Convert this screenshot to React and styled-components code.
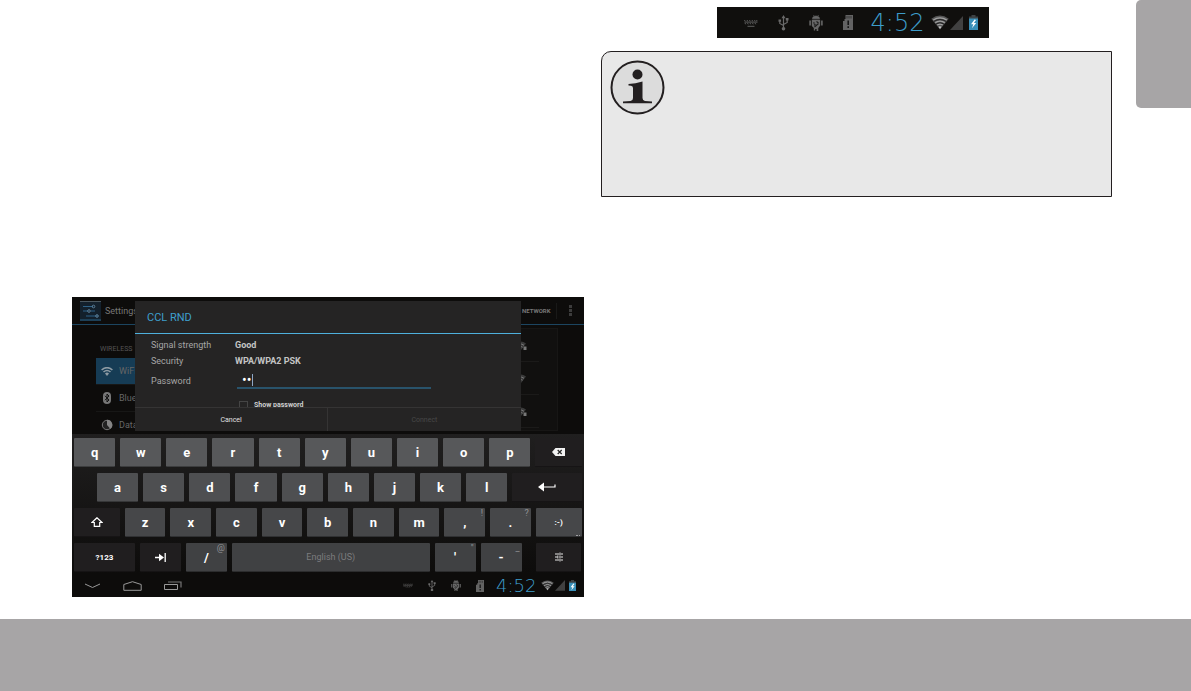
import { useState } from "react";
import styled, { createGlobalStyle } from "styled-components";

const GlobalStyle = createGlobalStyle`
    * {
        box-sizing: border-box;
    }

    body {
        margin: 0;
        background: #fff;
        font-family: Roboto, "Liberation Sans", sans-serif;
    }

    button {
        border: none;
        padding: 0;
        background: none;
        color: inherit;
        font-family: inherit;
    }
`;

const KeyboardIcon = ({ width }) => (
    <Icon viewBox="0 0 14 8" $width={width}>
        <path d="M.5 1l.7 1.3M3 1l.7 1.3M5.5 1l.7 1.3M8 1l.7 1.3M10.5 1l.7 1.3M12.8 1v1.3M1 4l.7 1.3M3.5 4l.7 1.3M6 4l.7 1.3M8.5 4l.7 1.3M11 4l.7 1.3M.5 3.1h13M3.5 7.3h7" stroke="#5f5f5f" strokeWidth="1" fill="none" />
    </Icon>
);

const UsbIcon = ({ width }) => (
    <Icon viewBox="0 0 11 16" $width={width}>
        <path d="M5.5 3v10M5.5 10.5L1.8 8.5V6M5.5 9.5L9.2 7.5V4.5" stroke="#6a6a6a" strokeWidth="1.2" fill="none" />
        <path d="M5.5 0l2 3.2h-4zM.5 4.6h2.6v2.2H.5zM7.8 3h2.7v2.6H7.8z" fill="#6a6a6a" />
        <circle cx="5.5" cy="13.7" r="1.8" fill="#6a6a6a" />
    </Icon>
);

const AndroidIcon = ({ width }) => (
    <Icon viewBox="0 0 14 16" $width={width}>
        <path d="M3.5 3.8C3.5 2 4.8 1 7 1s3.500 1 3.500 2.800zM4.300 0l1 1.400M9.700 0l-1 1.400" fill="#666" stroke="#666" strokeWidth=".6" />
        <path d="M2.800 4.800h8.400v5.700L9.300 13v3H7.600v-2H6.200v1.500H4.800V13l-2-2zM.3 5.500h1.600v5H.3zM12.100 5.500h1.600v5h-1.600z" fill="#666" />
        <path d="M5.500 12l4-3.500M7.500 6.500l2 1.500M4.500 7.500l1 1M5 10.300l1.500-1" stroke="#1b1b1a" strokeWidth="1.100" />
    </Icon>
);

const CardIcon = ({ width }) => (
    <Icon viewBox="0 0 10 15" $width={width}>
        <path d="M2.500 0H10v15H0V6h1.500V4h1z" fill="#636363" />
        <path d="M4 1v2.500M6 1v2.500M8 1v2.500" stroke="#2c2c2c" strokeWidth=".8" />
        <path d="M5.200 5.500v4.500M5.200 11.300v1.700" stroke="#111" strokeWidth="1.500" />
    </Icon>
);

const WifiStatusIcon = ({ width }) => (
    <Icon viewBox="0 0 18 15" $width={width}>
        <path d="M9 14.500L.3 3.700Q9-2.600 17.700 3.700z" fill="#555" />
        <path d="M2.300 5q6.700-4.400 13.400 0M4.300 7.600q4.700-3 9.400 0M6.300 10q2.700-1.700 5.400 0" stroke="#a2a2a2" strokeWidth="1.300" fill="none" />
        <path d="M3 6.400q6-3.800 12 0M5 9q4-2.600 8 0" stroke="#222" strokeWidth="1" fill="none" />
        <path d="M7.400 11.800L9 14l1.600-2.200Q9 10.800 7.400 11.800z" fill="#c4c4c4" />
    </Icon>
);

const SignalIcon = ({ width }) => (
    <Icon viewBox="0 0 13 14" $width={width}>
        <path d="M13 0v14H0z" fill="#414141" />
    </Icon>
);

const BatteryIcon = ({ width }) => (
    <Icon viewBox="0 0 9 15" $width={width}>
        <path d="M2.500 0h4v1.500H9V4H0V1.500h2.500z" fill="#3d4244" />
        <path d="M0 3.500h9V15H0z" fill="#398fb8" />
        <path d="M5.600 4.500L2 9.300h2.300L3 13.300l4.200-5.200H4.900L7 5z" fill="#fff" />
    </Icon>
);

const StatusIcons = ({ compact }) => (
    <StatusGroup $compact={compact}>
        <Notifications $compact={compact}>
            <KeyboardIcon width={compact ? 10 : 14} />
            <UsbIcon width={compact ? 8 : 11} />
            <AndroidIcon width={compact ? 10 : 14} />
            <CardIcon width={compact ? 8 : 10} />
        </Notifications>
        <Clock $compact={compact}>4:52</Clock>
        <Signals>
            <WifiStatusIcon width={compact ? 13 : 18} />
            <SignalIcon width={compact ? 10 : 13} />
        </Signals>
        <BatteryIcon width={compact ? 7 : 9} />
    </StatusGroup>
);

const InfoIcon = () => (
    <Icon viewBox="0 0 55 55" $width={55}>
        <circle cx="27.500" cy="27.500" r="26" fill="#dcdcdc" stroke="#231f20" strokeWidth="2" />
        <circle cx="27.500" cy="14.500" r="5" fill="#231f20" />
        <path d="M18.500 24q7-.2 14-2.500V38q0 2.700 2.500 3l7 .6v1.600H13v-1.600l7.500-.6q2.500-.3 2.500-3V28q0-2-2-2.200l-2.500-.3z" fill="#231f20" />
    </Icon>
);

const SettingsIcon = () => (
    <Icon viewBox="0 0 21 20" $width={21}>
        <path d="M0 0h21v20H0z" fill="#13202c" />
        <path d="M0 .5h21" stroke="#4a565e" />
        <path d="M0 19h21" stroke="#1d4058" strokeWidth="2" />
        <path d="M3 5.500h10M3 10h5M11 10h4M6 15h12" stroke="#2d6187" strokeWidth="1.200" />
        <circle cx="13.500" cy="5.500" r="1.300" stroke="#5c7f98" fill="none" />
        <circle cx="9" cy="10" r="1.300" stroke="#5c7f98" fill="none" />
        <circle cx="17" cy="15" r="1.300" stroke="#5c7f98" fill="none" />
    </Icon>
);

const WifiIcon = () => (
    <Icon viewBox="0 0 12 9" $width={12}>
        <path d="M.6 3Q6-1.600 11.400 3M2.500 5Q6 2 9.500 5" stroke="#8d9aa3" strokeWidth="1.600" fill="none" />
        <path d="M4 6.500Q6 4.700 8 6.500L6 9z" fill="#8d9aa3" />
    </Icon>
);

const BluetoothIcon = () => (
    <Icon viewBox="0 0 12 12" $width={12}>
        <rect x="2" y="0" width="8" height="12" rx="4" fill="#777" />
        <path d="M4 3.800l4 4.200-2 2V2l2 2-4 4.200" stroke="#111" fill="none" />
    </Icon>
);

const DataIcon = () => (
    <Icon viewBox="0 0 12 12" $width={12}>
        <circle cx="6" cy="6" r="4.700" stroke="#777" strokeWidth="1" fill="#222" />
        <path d="M6 6V.8A5.200 5.200 0 0 1 9.500 10z" fill="#858585" />
    </Icon>
);

const NetworkWifiIcon = ({ locked }) => (
    <Icon viewBox="0 0 12 9" $width={12}>
        <path d="M0 2.500Q6-1.500 11 2.500L6 9z" fill="#3a3a3a" />
        <path d="M4 3.300q3-.8 5 1M4.500 5.800q2-.6 3 .4" stroke="#777" fill="none" />
        {locked && <path d="M8.500 5.500h3V9h-3z" fill="#777" />}
    </Icon>
);

const BackspaceIcon = () => (
    <Icon viewBox="0 0 13 8" $width={13}>
        <path d="M0 4l3.500-4H13v8H3.500z" fill="#f2f2f2" />
        <path d="M5.700 2l4 4M9.700 2l-4 4" stroke="#222" strokeWidth="1.200" />
    </Icon>
);

const EnterIcon = () => (
    <Icon viewBox="0 0 18 10" $width={18}>
        <path d="M0 5l6-4.500v9z" fill="#fff" />
        <path d="M5 5h12V2.500" stroke="#fff" strokeWidth="1.200" fill="none" />
    </Icon>
);

const ShiftIcon = () => (
    <Icon viewBox="0 0 12 10" $width={12}>
        <path d="M6 .8L1 5.500h2.300v3.800h5.400V5.500H11z" stroke="#fff" strokeWidth="1.200" fill="none" />
    </Icon>
);

const TabIcon = () => (
    <Icon viewBox="0 0 11 9" $width={11}>
        <path d="M0 4.500h5M10.200 0v9" stroke="#fff" strokeWidth="1.300" />
        <path d="M4 .8L9 4.500 4 8.200z" fill="#fff" />
    </Icon>
);

const TuneIcon = () => (
    <Icon viewBox="0 0 10 10" $width={10}>
        <path d="M1 2h4M7 2h2M1 5h2M5 5h4M1 8h4M7 8h2M6 .5v3M3.800 3.500v3M6 6.500v3" stroke="#e6e6e6" strokeWidth="1" />
    </Icon>
);

const BackIcon = () => (
    <Icon viewBox="0 0 17 6" $width={17}>
        <path d="M1 1l7.500 3.500L16 1" stroke="#999" fill="none" />
    </Icon>
);

const HomeIcon = () => (
    <Icon viewBox="0 0 19 10" $width={19}>
        <path d="M.8 9.300V3.500L9.500.7l8.700 2.800v5.800z" stroke="#999" fill="none" />
    </Icon>
);

const RecentIcon = () => (
    <Icon viewBox="0 0 18 9" $width={18}>
        <path d="M.5 3.500h13v5H.5z" stroke="#999" fill="none" />
        <path d="M4 1h13v5.500" stroke="#777" strokeWidth="1.200" fill="none" />
    </Icon>
);

const keyRows = [
    {
        tone: "#57585a",
        keys: [
            ..."qwertyuiop".split("").map((label) => ({ label })),
            { name: "Backspace", icon: <BackspaceIcon />, dark: true, grow: 46 }
        ]
    },
    {
        tone: "#4e4f51",
        indent: true,
        keys: [
            ..."asdfghjkl".split("").map((label) => ({ label })),
            { name: "Enter", icon: <EnterIcon />, dark: true, grow: 69 }
        ]
    },
    {
        tone: "#464749",
        keys: [
            { name: "Shift", icon: <ShiftIcon />, dark: true, grow: 46 },
            ..."zxcvbnm".split("").map((label) => ({ label })),
            { label: ",", hint: "!" },
            { label: ".", hint: "?" },
            { label: ":-)", more: true, small: true, grow: 46 }
        ]
    },
    {
        tone: "#404143",
        keys: [
            { label: "?123", small: true, dark: true, grow: 61 },
            { name: "Tab", icon: <TabIcon />, dark: true },
            { label: "/", hint: "@" },
            { label: "English (US)", space: true, grow: 198 },
            { label: "'", hint: "\"" },
            { label: "-", hint: "_" },
            { name: "Input options", icon: <TuneIcon />, dark: true, grow: 46, apart: true }
        ]
    }
];

const networks = [
    { id: 1, locked: true },
    { id: 2, locked: false },
    { id: 3, locked: true }
];

const App = () => {
    const [password, setPassword] = useState("••");
    const [isShown, setIsShown] = useState(false);

    return (
        <Page>
            <GlobalStyle />
            <Main>
                <Tablet>
                    <Backdrop>
                        <AppBar>
                            <SettingsIcon />
                            <AppTitle>Settings</AppTitle>
                            <AddNetwork>ADD NETWORK</AddNetwork>
                            <MenuButton aria-label="More">
                                <Dot />
                                <Dot />
                                <Dot />
                            </MenuButton>
                        </AppBar>
                        <SettingsBody>
                            <Menu>
                                <MenuHeading>WIRELESS</MenuHeading>
                                <MenuItem $active><WifiIcon />WiFi</MenuItem>
                                <MenuItem><BluetoothIcon />Bluetooth</MenuItem>
                                <MenuItem><DataIcon />Data usage</MenuItem>
                            </Menu>
                            <NetworkList>
                                {networks.map((network) => (
                                    <Network key={network.id}>
                                        <NetworkWifiIcon locked={network.locked} />
                                    </Network>
                                ))}
                            </NetworkList>
                        </SettingsBody>
                        <Dialog role="dialog" aria-labelledby="network">
                            <DialogTitle id="network">CCL RND</DialogTitle>
                            <DialogBody>
                                <Row>
                                    <Term>Signal strength</Term>
                                    <Value>Good</Value>
                                </Row>
                                <Row>
                                    <Term>Security</Term>
                                    <Value>WPA/WPA2 PSK</Value>
                                </Row>
                                <Row $tall>
                                    <Term as="label" htmlFor="password">Password</Term>
                                    <Field>
                                        <PasswordInput
                                            id="password"
                                            value={password}
                                            onChange={(e) => setPassword(e.target.value)}
                                        />
                                        <Caret />
                                    </Field>
                                </Row>
                                <ShowPassword>
                                    <Checkbox
                                        type="checkbox"
                                        checked={isShown}
                                        onChange={() => setIsShown(!isShown)}
                                    />
                                    Show password
                                </ShowPassword>
                            </DialogBody>
                            <Actions>
                                <Action>Cancel</Action>
                                <Action disabled>Connect</Action>
                            </Actions>
                        </Dialog>
                    </Backdrop>
                    <Keyboard>
                        {keyRows.map((row) => (
                            <KeyRow key={row.tone} $indent={row.indent}>
                                {row.keys.map((item) => (
                                    <Key
                                        key={item.label || item.name}
                                        aria-label={item.name}
                                        $tone={item.dark ? "#201e1f" : row.tone}
                                        $grow={item.grow}
                                        $small={item.small}
                                        $space={item.space}
                                        $apart={item.apart}
                                    >
                                        {item.icon || item.label}
                                        {item.hint && <Hint>{item.hint}</Hint>}
                                        {item.more && <MoreMark />}
                                    </Key>
                                ))}
                            </KeyRow>
                        ))}
                    </Keyboard>
                    <NavBar>
                        <NavButton aria-label="Back"><BackIcon /></NavButton>
                        <NavButton aria-label="Home"><HomeIcon /></NavButton>
                        <NavButton aria-label="Recent apps"><RecentIcon /></NavButton>
                        <StatusIcons compact />
                    </NavBar>
                </Tablet>
                <Notes>
                    <StatusBar>
                        <StatusIcons />
                    </StatusBar>
                    <InfoBox>
                        <InfoIcon />
                    </InfoBox>
                </Notes>
                <SideTab />
            </Main>
            <Footer />
        </Page>
    );
};

const Page = styled.div`
    display: flex;
    flex-direction: column;
    min-height: 100vh;
`;

const Main = styled.main`
    flex: 1;
    display: grid;
    grid-template-columns: 1fr 1fr auto;
    column-gap: 17px;
    padding-left: 72px;
`;

const Footer = styled.footer`
    height: 72px;
    background: #a7a5a6;
`;

const SideTab = styled.aside`
    width: 55px;
    height: 108px;
    margin-left: 7px;
    border-radius: 5px 0 0 5px;
    background: #a7a5a6;
`;

const Icon = styled.svg`
    display: block;
    flex: none;
    width: ${({ $width }) => $width}px;
`;

const Notes = styled.section`
    padding-top: 7px;
`;

const StatusBar = styled.div`
    display: flex;
    align-items: center;
    width: 272px;
    height: 31px;
    margin: 0 0 13px 116px;
    padding-right: 11px;
    background: #100f0d;
`;

const StatusGroup = styled.div`
    display: flex;
    align-items: center;
    gap: ${({ $compact }) => ($compact ? 4 : 6)}px;
    margin-left: auto;
`;

const Notifications = styled.div`
    display: flex;
    align-items: center;
    gap: ${({ $compact }) => ($compact ? 15 : 20)}px;
    margin-right: ${({ $compact }) => ($compact ? 8 : 12)}px;
`;

const Clock = styled.span`
    color: #3d9cc9;
    font-family: "DejaVu Sans", sans-serif;
    font-weight: 200;
    font-size: ${({ $compact }) => ($compact ? 18 : 24)}px;
    line-height: 1;
`;

const Signals = styled.div`
    display: flex;
    align-items: center;
    gap: 1px;
`;

const InfoBox = styled.div`
    min-height: 146px;
    padding: 8px;
    border: 1px solid #231f20;
    border-radius: 10px 0 0 0;
    background: #e8e8e8;
`;

const Tablet = styled.section`
    align-self: end;
    margin-bottom: 22px;
    background: #0d0c0b;
`;

const Backdrop = styled.div`
    position: relative;
    height: 137px;
    overflow: hidden;
`;

const AppBar = styled.header`
    display: flex;
    align-items: center;
    height: 28px;
    padding: 0 8px;
    border-bottom: 1px solid #1c4560;
    color: #777;
`;

const AppTitle = styled.span`
    margin-left: 4px;
    font-size: 9px;
`;

const AddNetwork = styled.button`
    margin-left: auto;
    padding-right: 5px;
    border-right: 1px solid #191918;
    font-size: 6px;
    font-weight: 700;
    line-height: 16px;
`;

const MenuButton = styled.button`
    display: grid;
    gap: 1px;
    margin: 0 4px 0 12px;
`;

const Dot = styled.span`
    width: 3px;
    height: 3px;
    background: #3c3c3c;
`;

const SettingsBody = styled.div`
    display: flex;
    padding: 3px 26px 3px 24px;
`;

const Menu = styled.nav`
    flex: 1;
    padding-top: 16px;
`;

const MenuHeading = styled.div`
    height: 14px;
    padding-left: 4px;
    color: #555;
    font-size: 7px;
    line-height: 10px;
`;

const MenuItem = styled.div`
    display: flex;
    align-items: center;
    gap: 6px;
    height: 27px;
    padding-left: 5px;
    border-bottom: 1px solid #171716;
    background: ${({ $active }) => ($active ? "#163c55" : "none")};
    color: #666;
    font-size: 9px;
`;

const NetworkList = styled.div`
    flex: 2;
    height: 103px;
    padding-right: 18px;
    border: 1px solid #171615;
    background: #11100f;
`;

const Network = styled.div`
    display: flex;
    justify-content: flex-end;
    align-items: center;
    height: 33px;
    padding-right: 12px;
    border-bottom: 1px solid #1b1a19;
`;

const Dialog = styled.div`
    position: absolute;
    inset: 4px 63px 3px;
    display: flex;
    flex-direction: column;
    background: #252424;
    color: #a6a6a6;
`;

const DialogTitle = styled.h1`
    flex: none;
    height: 33px;
    margin: 0;
    padding-left: 12px;
    border-bottom: 1px solid #4eb0dd;
    color: #3e9fce;
    font-size: 11px;
    font-weight: 400;
    line-height: 33px;
`;

const DialogBody = styled.div`
    flex: 1;
    min-height: 0;
    padding: 3px 16px 0;
    overflow: hidden;
`;

const Row = styled.div`
    display: flex;
    align-items: center;
    height: ${({ $tall }) => ($tall ? 24 : 16)}px;
    font-size: 9px;
`;

const Term = styled.span`
    width: 84px;
`;

const Value = styled.span`
    color: #c4c4c4;
    font-weight: 700;
`;

const Field = styled.div`
    position: relative;
    width: 194px;
    margin-left: 2px;
`;

const PasswordInput = styled.input`
    display: block;
    width: 100%;
    height: 16px;
    padding: 0 5px;
    border: none;
    border-bottom: 2px solid #29536b;
    outline: none;
    background: none;
    color: #fff;
    font-family: inherit;
    font-size: 14px;
`;

const Caret = styled.span`
    position: absolute;
    top: 1px;
    left: 15px;
    width: 1px;
    height: 12px;
    background: #8ea6c4;
`;

const ShowPassword = styled.label`
    display: flex;
    align-items: center;
    gap: 6px;
    margin: 7px 0 0 88px;
    color: #d0d0d0;
    font-size: 7px;
    font-weight: 700;
    line-height: 10px;
`;

const Checkbox = styled.input`
    appearance: none;
    width: 9px;
    height: 9px;
    margin: 0;
    border: 1px solid #454545;
`;

const Actions = styled.div`
    flex: none;
    display: flex;
    height: 24px;
    border-top: 1px solid #353434;
`;

const Action = styled.button`
    flex: 1;
    color: #e0e0e0;
    font-size: 7px;

    &:disabled {
        border-left: 1px solid #353434;
        color: #484848;
    }
`;

const Keyboard = styled.div`
    display: grid;
    gap: 6px;
    padding: 4px 2px 2px;
    background: linear-gradient(#201f1f, #0d0c0b);
`;

const KeyRow = styled.div`
    display: flex;
    gap: 5px;
    padding-left: ${({ $indent }) => ($indent ? 23 : 0)}px;
`;

const Key = styled.button`
    position: relative;
    display: flex;
    flex: ${({ $grow }) => $grow || 41} 1 0;
    align-items: center;
    justify-content: center;
    min-width: 0;
    height: 29px;
    margin-left: ${({ $apart }) => ($apart ? 9 : 0)}px;
    border-bottom: 1px solid rgba(0, 0, 0, 0.3);
    border-radius: 1px;
    background: ${({ $tone }) => $tone};
    color: ${({ $space }) => ($space ? "#7c7c7e" : "#fff")};
    font-size: ${({ $small, $space }) => ($small ? 8 : $space ? 9 : 13)}px;
    font-weight: ${({ $space }) => ($space ? 400 : 700)};
`;

const Hint = styled.span`
    position: absolute;
    top: 1px;
    right: 2px;
    color: #929294;
    font-size: 9px;
    font-weight: 400;
    line-height: 9px;
`;

const MoreMark = styled.span`
    position: absolute;
    right: 2px;
    bottom: 0;
    width: 4px;
    border-bottom: 1px dotted #a0a0a2;
`;

const NavBar = styled.div`
    display: flex;
    align-items: center;
    gap: 22px;
    height: 23px;
    padding: 0 8px 0 12px;
`;

const NavButton = styled.button`
    flex: none;
`;

export default App;
